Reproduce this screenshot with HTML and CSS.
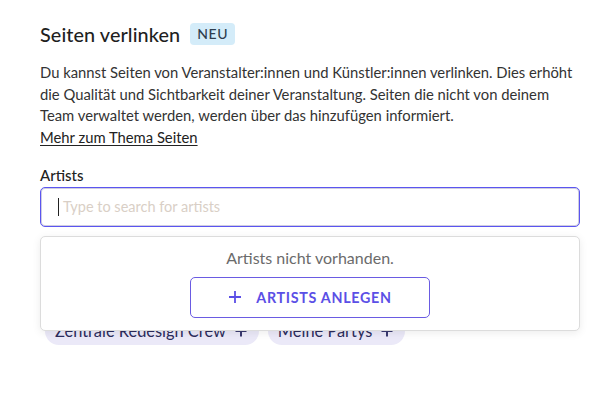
FILE: index.html
```html
<!DOCTYPE html>
<html lang="de">
<head>
<meta charset="utf-8">
<link rel="stylesheet" href="styles.css">
</head>
<body>
<div class="panel">
  <div class="header">
    <h2 class="title">Seiten verlinken</h2>
    <span class="badge">NEU</span>
  </div>
  <p class="desc">Du kannst Seiten von Veranstalter:innen und Künstler:innen verlinken. Dies erhöht die Qualität und Sichtbarkeit deiner Veranstaltung. Seiten die nicht von deinem Team verwaltet werden, werden über das hinzufügen informiert.<br><a class="link" href="#">Mehr zum Thema Seiten</a></p>
  <div class="field">
    <label class="label">Artists</label>
    <div class="input-wrap">
      <div class="input"><span class="caret"></span><span class="placeholder">Type to search for artists</span></div>
      <div class="dropdown">
        <div class="empty">Artists nicht vorhanden.</div>
        <button class="create"><svg class="plus" width="14" height="14" viewBox="0 0 14 14"><path d="M7 1v12M1 7h12" stroke="currentColor" stroke-width="1.8" fill="none"/></svg>ARTISTS ANLEGEN</button>
      </div>
    </div>
    <div class="chips">
      <span class="chip">Zentrale Redesign Crew <svg class="chip-plus" width="12" height="12" viewBox="0 0 12 12"><path d="M6 0.5v11M0.5 6h11" stroke="currentColor" stroke-width="2" fill="none"/></svg></span>
      <span class="chip">Meine Partys <svg class="chip-plus" width="12" height="12" viewBox="0 0 12 12"><path d="M6 0.5v11M0.5 6h11" stroke="currentColor" stroke-width="2" fill="none"/></svg></span>
    </div>
  </div>
</div>
</body>
</html>
```
FILE: styles.css
```css
html, body { margin: 0; padding: 0; background: #fff; }
body { font-family: Lato, "Noto Sans", sans-serif; color: #2b2b2b; }
.panel { width: 540px; padding: 21px 0 0 40px; }
.header { display: flex; align-items: center; gap: 10px; height: 26px; }
.title { margin: 0; font-size: 19.8px; font-weight: 500; color: #1f1f1f; letter-spacing: 0.1px; }
.badge { background: #d4ecf9; color: #2f3e4e; font-size: 14px; font-weight: 500; padding: 3px 7px; border-radius: 4px; letter-spacing: 0.6px; line-height: 16px; }
.desc { margin: 15px 0 0; font-size: 14.8px; line-height: 21.7px; color: #333; }
.link { color: #222; text-decoration: underline; text-underline-offset: 2px; }
.field { margin-top: 17px; }
.label { display: block; font-size: 15px; font-weight: 500; color: #222; line-height: 18px; margin-bottom: 3px; }
.input-wrap { position: relative; }
.input { height: 38px; border: 1px solid #5b55f0; box-shadow: inset 0 0 0 1px #cfcde0; border-radius: 5px; display: flex; align-items: center; padding-left: 17px; }
.caret { width: 1px; height: 18px; background: #222; margin-right: 4px; }
.placeholder { font-size: 14.5px; color: #d9cfc6; }
.dropdown { position: absolute; left: 0; right: 0; top: 49px; height: 95px; background: #fff; border: 1px solid #dcdcdc; border-radius: 5px; box-shadow: 0 2px 8px rgba(0,0,0,0.08); display: flex; flex-direction: column; align-items: center; z-index: 2; box-sizing: border-box; }
.empty { margin-top: 11px; font-size: 16px; color: #6b6b6b; line-height: 20px; }
.create { margin-top: 9px; width: 240px; height: 41px; border: 1px solid #6a5be2; border-radius: 5px; background: #fff; color: #5b4fe6; font-family: inherit; font-size: 14.3px; font-weight: 700; letter-spacing: 0.7px; display: flex; align-items: center; justify-content: center; gap: 14px; padding: 0; }
.plus { color: #5b4fe6; }
.chips { display: flex; gap: 9px; margin-top: 90px; padding-left: 5px; }
.chip { display: inline-flex; align-items: center; gap: 9px; background: #ebe9f8; color: #2c2c5c; font-size: 16.4px; border-radius: 14px; height: 28px; padding: 0 12px 0 10px; }
.chip-plus { color: #3a3a70; }
```
